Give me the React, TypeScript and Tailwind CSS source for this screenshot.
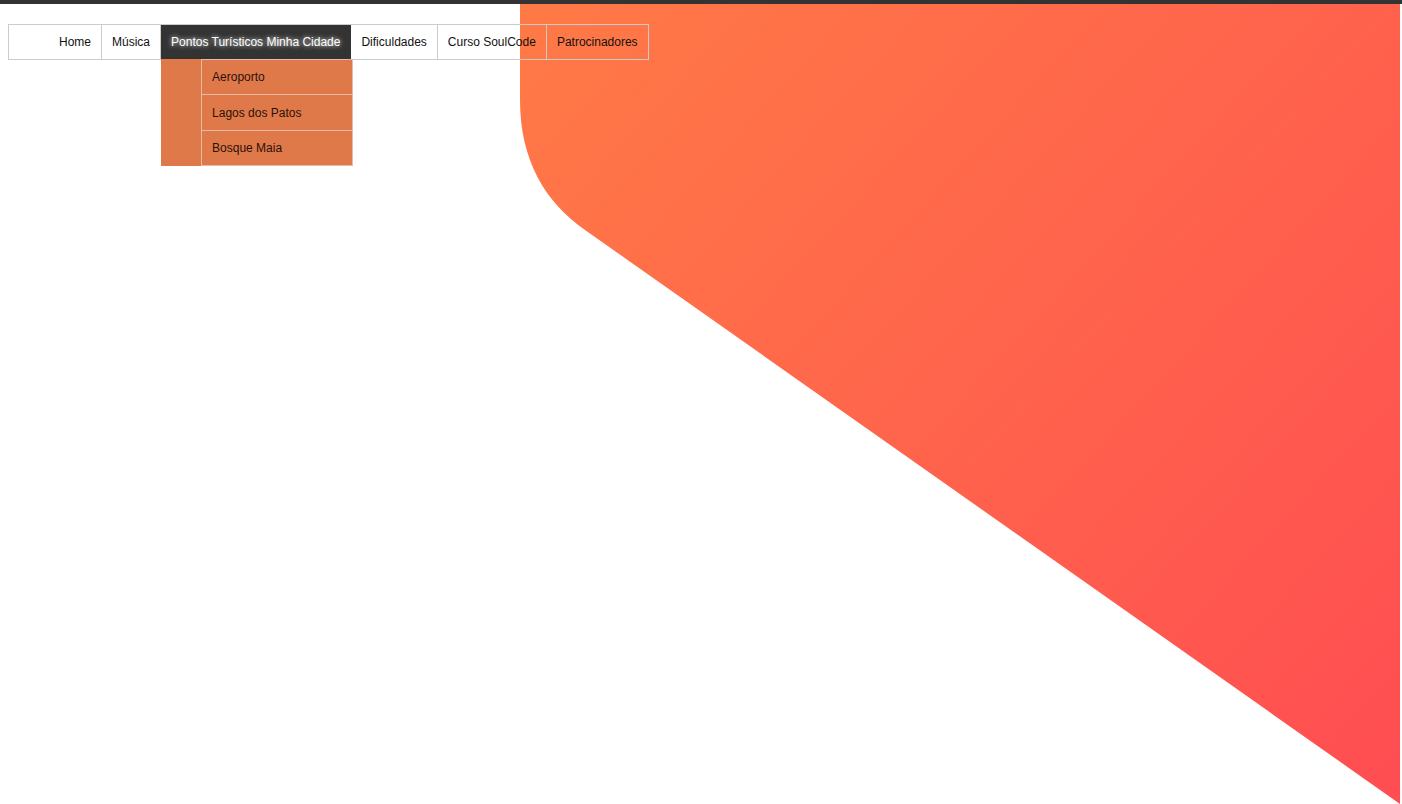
const menu = ["Home", "Música", "Pontos Turísticos Minha Cidade", "Dificuldades", "Curso SoulCode", "Patrocinadores"];
const submenu = ["Aeroporto", "Lagos dos Patos", "Bosque Maia"];

const Shape = () => (
  <svg
    className="absolute left-0 top-0 pointer-events-none"
    width="1402"
    height="804"
    viewBox="0 0 1402 804"
  >
    <defs>
      <linearGradient id="bg-grad" x1="520" y1="0" x2="1400" y2="804" gradientUnits="userSpaceOnUse">
        <stop offset="0" stopColor="#ff7a46" />
        <stop offset="1" stopColor="#ff4d52" />
      </linearGradient>
    </defs>
    <path d="M520 0 V100 C520 160 545 202 585 230 L1400 804 V0 Z" fill="url(#bg-grad)" />
  </svg>
);

const App = () => {
  return (
    <div className="relative h-[804px] w-full overflow-hidden bg-white font-['Liberation_Sans',Arial,sans-serif] text-[12px] text-[#111]">
      <Shape />
      <div className="relative h-[4px] bg-[#333]" />
      <div className="relative z-10 px-2 pt-5">
        <ul className="flex w-max border-y border-l border-[#ccc] pl-[40px]">
          {menu.map((item, i) => {
            const active = i === 2;
            return (
              <li
                key={item}
                className={`relative flex h-[34px] items-center border-r px-[10px] ${
                  active
                    ? "border-[#333] bg-[#333] text-white [text-shadow:0_0_5px_#fff]"
                    : "border-[#ccc]"
                }`}
              >
                {item}
                {active && (
                  <ul className="absolute left-0 top-[34px] w-[192px] bg-[#e0794a] pl-[40px] [text-shadow:none]">
                    {submenu.map((sub, j) => (
                      <li
                        key={sub}
                        className={`flex items-center border-x border-t border-[#e8b9a4] px-[10px] text-[#2a1208] ${
                          j === 0 ? "h-[35px]" : "h-[36px]"
                        } ${j === submenu.length - 1 ? "border-b" : ""}`}
                      >
                        {sub}
                      </li>
                    ))}
                  </ul>
                )}
              </li>
            );
          })}
        </ul>
      </div>
    </div>
  );
};

export default App;
